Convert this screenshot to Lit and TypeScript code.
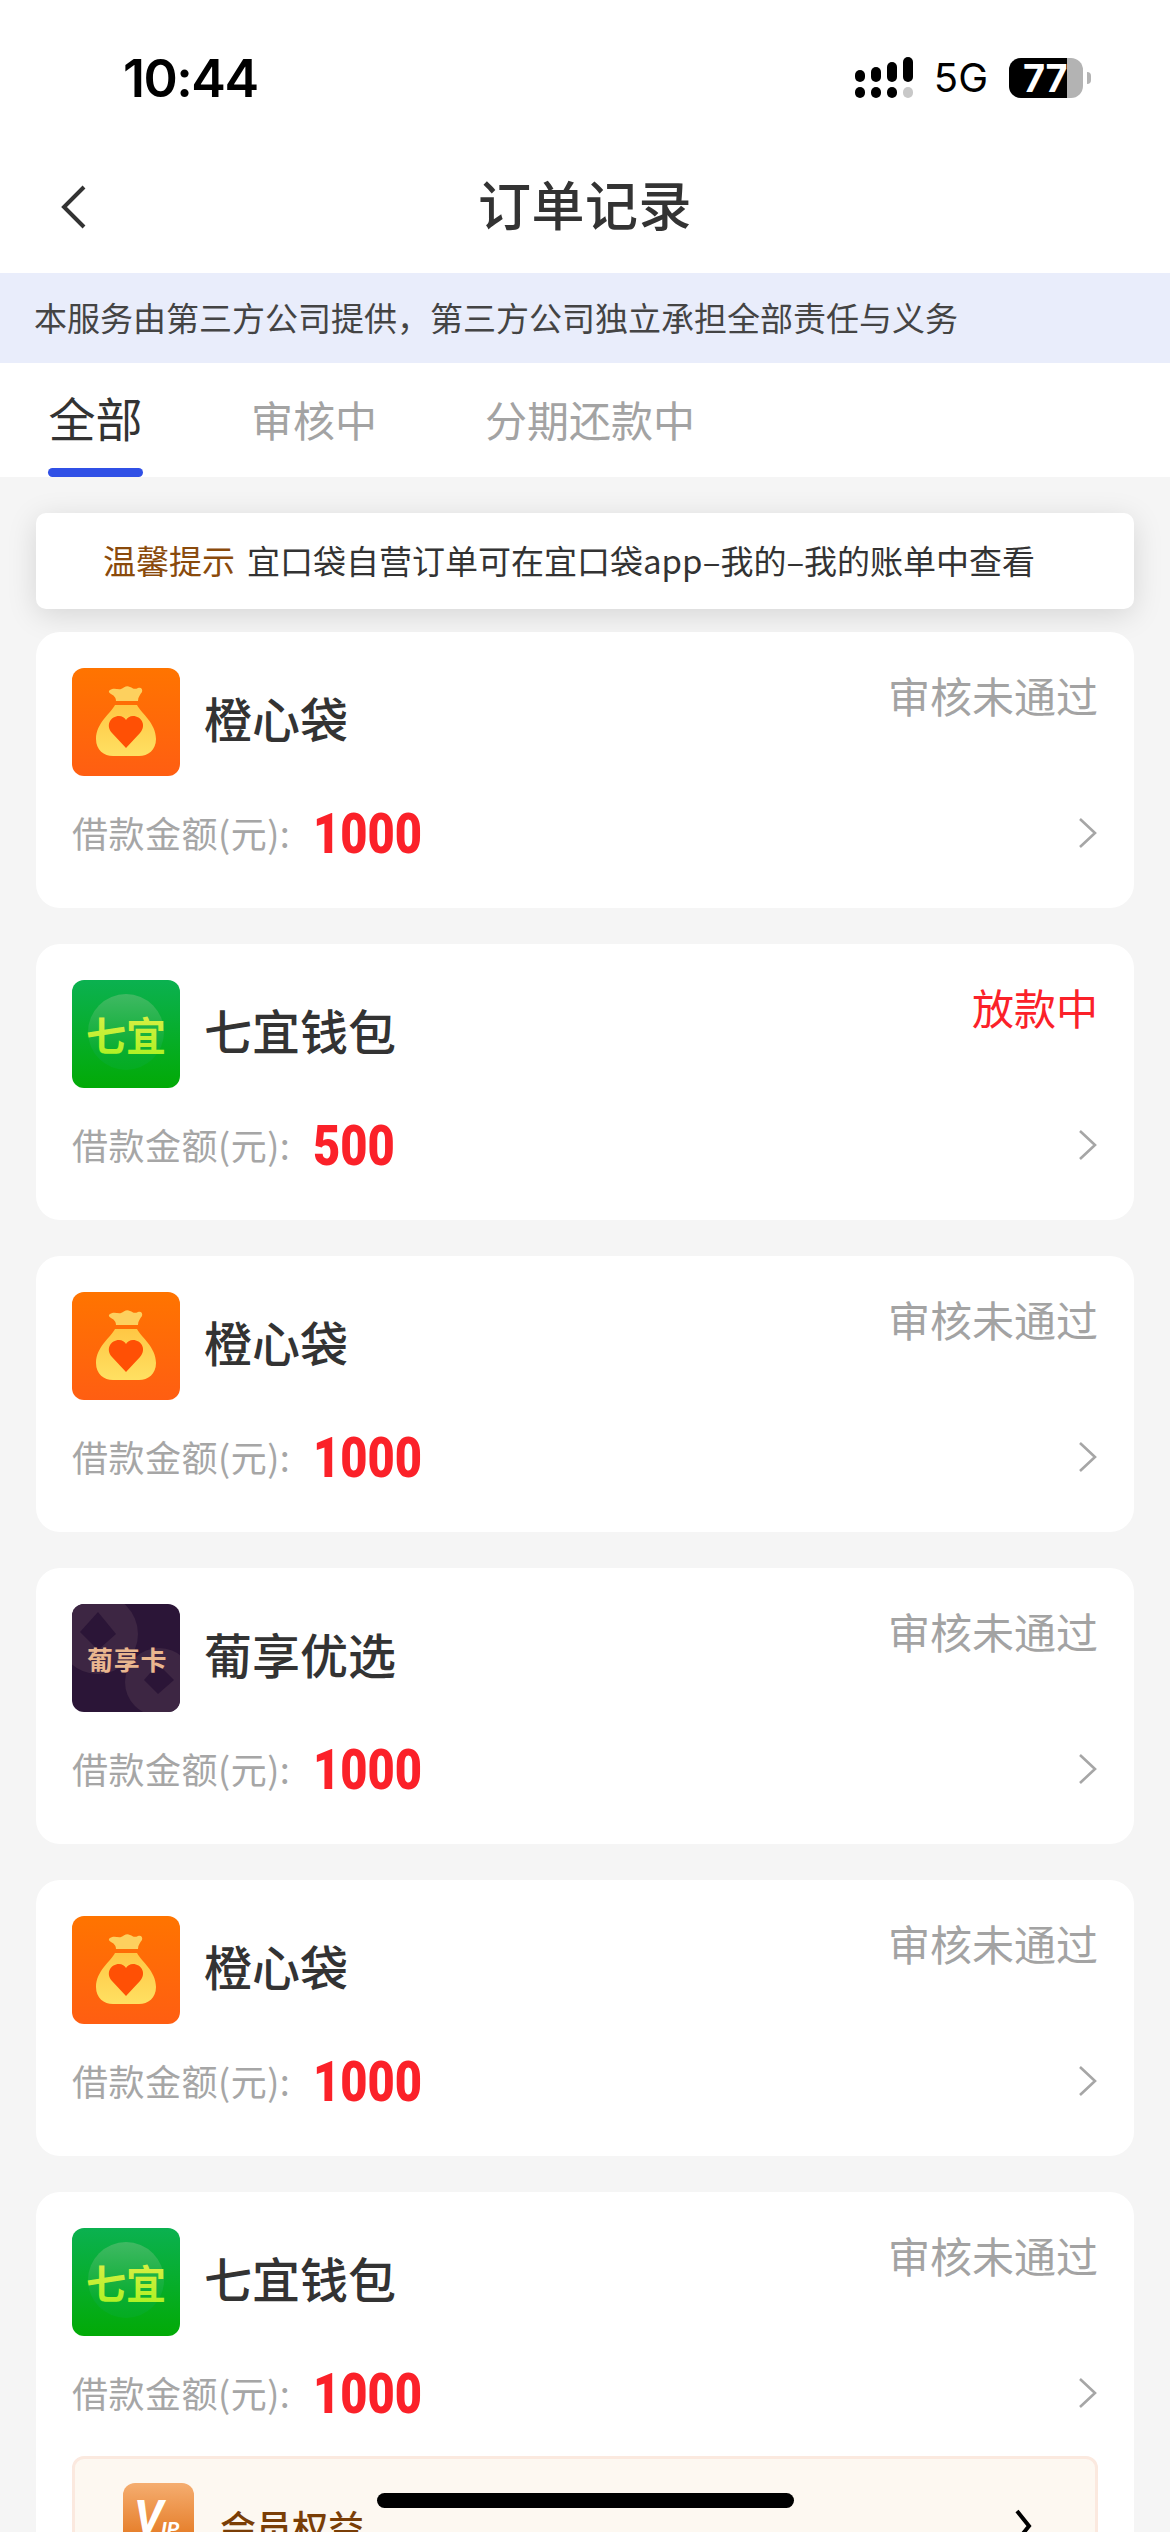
import { LitElement, html, css, svg } from 'lit';
import { customElement } from 'lit/decorators.js';

type IconKind = 'orange' | 'green' | 'grape';

interface Order {
  icon: IconKind;
  name: string;
  status: string;
  amount: string;
  paying?: boolean;
  vip?: boolean;
}

const orders: Order[] = [
  { icon: 'orange', name: '橙心袋', status: '审核未通过', amount: '1000' },
  { icon: 'green', name: '七宜钱包', status: '放款中', amount: '500', paying: true },
  { icon: 'orange', name: '橙心袋', status: '审核未通过', amount: '1000' },
  { icon: 'grape', name: '葡享优选', status: '审核未通过', amount: '1000' },
  { icon: 'orange', name: '橙心袋', status: '审核未通过', amount: '1000' },
  { icon: 'green', name: '七宜钱包', status: '审核未通过', amount: '1000', vip: true },
];

const CJK = `"Noto Sans CJK SC", sans-serif`;

// each svg needs its own gradient ids, the icons repeat on the page
let uid = 0;

function orangeIcon() {
  const id = `o${uid++}`;
  return svg`<svg class="logo" viewBox="0 0 108 108">
    <defs>
      <linearGradient id="${id}a" x1="0" y1="0" x2="0" y2="1">
        <stop offset="0" stop-color="#ff7400"/><stop offset="1" stop-color="#ff5e12"/>
      </linearGradient>
      <linearGradient id="${id}b" x1="0" y1="0" x2="0" y2="1">
        <stop offset="0" stop-color="#ffc744"/><stop offset="1" stop-color="#ffe062"/>
      </linearGradient>
    </defs>
    <rect width="108" height="108" rx="12" fill="url(#${id}a)"/>
    <path d="M38 22c4-3 8 0 11-1 3-1 5-4 9-2 3 1 4 3 8 1 3-1 5 1 4 4-2 3-4 5-4 9H44c0-4-3-6-5-7-2-1-3-3-1-4z" fill="#fdd05e"/>
    <path d="M43 37h22c4 8 19 18 19 34 0 11-8 17-17 17H41c-9 0-17-6-17-17 0-16 15-26 19-34z" fill="url(#${id}b)"/>
    <path d="M54 80 40 65c-7-8-1-17 7-17 3 0 6 2 7 4 1-2 4-4 7-4 8 0 14 9 7 17z" fill="#ff5005"/>
  </svg>`;
}

function greenIcon() {
  const id = `g${uid++}`;
  return svg`<svg class="logo" viewBox="0 0 108 108">
    <defs>
      <linearGradient id="${id}a" x1="0" y1="0" x2="0" y2="1">
        <stop offset="0" stop-color="#0bb150"/><stop offset="1" stop-color="#02aa06"/>
      </linearGradient>
      <linearGradient id="${id}b" x1="0" y1="0" x2="0" y2="1">
        <stop offset="0" stop-color="#3fb963"/><stop offset="0.75" stop-color="#08ad30"/><stop offset="1" stop-color="#05ac20"/>
      </linearGradient>
      <linearGradient id="${id}c" x1="0" y1="0" x2="0" y2="1">
        <stop offset="0" stop-color="#e4ee4c"/><stop offset="1" stop-color="#a6f21e"/>
      </linearGradient>
    </defs>
    <rect width="108" height="108" rx="12" fill="url(#${id}a)"/>
    <circle cx="54" cy="52" r="38" fill="url(#${id}b)"/>
    <text x="14" y="71" font-size="40" font-weight="700" font-family=${CJK} fill="url(#${id}c)">七宜</text>
  </svg>`;
}

function grapeIcon() {
  return svg`<svg class="logo" viewBox="0 0 108 108">
    <defs><clipPath id="gr${uid}"><rect width="108" height="108" rx="12"/></clipPath></defs>
    <g clip-path="url(#gr${uid++})">
      <rect width="108" height="108" fill="#2b1537"/>
      <circle cx="26" cy="30" r="40" fill="#3d2643"/>
      <circle cx="87" cy="78" r="34" fill="#3d2643"/>
      <path d="M26 8 44 30 26 46 8 28z" fill="#2b1537"/>
      <path d="M86 60 102 76 86 90 72 76z" fill="#2b1537"/>
      <text x="15" y="66" font-size="26" font-weight="700" letter-spacing="0.8" font-family=${CJK} fill="#eab78f">葡享卡</text>
    </g>
  </svg>`;
}

function vipIcon() {
  return svg`<svg class="vip-logo" viewBox="0 0 71 71">
    <defs>
      <linearGradient id="vipg" x1="0" y1="0" x2="0" y2="1">
        <stop offset="0" stop-color="#f5ad70"/><stop offset="1" stop-color="#e06d10"/>
      </linearGradient>
    </defs>
    <rect width="71" height="71" rx="12" fill="url(#vipg)"/>
    <text x="11" y="50" font-size="46" font-weight="700" font-style="italic" font-family="Roboto, sans-serif" fill="#fff">V</text>
    <text x="38" y="53" font-size="20" font-weight="700" font-style="italic" font-family="Roboto, sans-serif" fill="#fff">IP</text>
  </svg>`;
}

const logos: Record<IconKind, () => unknown> = {
  orange: orangeIcon,
  green: greenIcon,
  grape: grapeIcon,
};

@customElement('app-root')
export class AppRoot extends LitElement {
  static styles = css`
    :host {
      display: block;
      position: relative;
      width: 1170px;
      height: 2532px;
      overflow: hidden;
      background: #f5f5f5;
      font-family: "Noto Sans CJK SC", sans-serif;
      color: #333;
    }

    .head {
      background: #fff;
    }

    .status-bar {
      display: flex;
      align-items: center;
      justify-content: space-between;
      height: 60px;
      padding: 48px 79px 33px 123px;
      font-family: Inter, sans-serif;
      color: #000;
    }

    .time {
      font-size: 52px;
      font-weight: 600;
      letter-spacing: -1.5px;
    }

    .indicators {
      display: flex;
      align-items: center;
      gap: 21px;
    }

    .signal {
      width: 58px;
      height: 42px;
      display: block;
    }

    .net {
      font-size: 40px;
      line-height: 60px;
    }

    .battery-wrap {
      display: flex;
      align-items: center;
      gap: 4px;
    }

    .battery {
      position: relative;
      width: 74px;
      height: 40px;
      border-radius: 12px;
      overflow: hidden;
      background: #b3b3b3;
    }

    .battery-fill {
      width: 58px;
      height: 40px;
      background: #000;
      color: #fff;
      font-size: 38px;
      font-weight: 700;
      line-height: 40px;
      text-align: right;
      letter-spacing: -0.5px;
    }

    .nub {
      width: 4px;
      height: 12px;
      border-radius: 0 6px 6px 0;
      background: #b3b3b3;
    }

    .nav {
      position: relative;
      display: flex;
      align-items: center;
      justify-content: center;
      height: 132px;
    }

    .back {
      position: absolute;
      left: 61px;
      top: 44px;
      width: 26px;
      height: 44px;
    }

    .nav-title {
      margin-bottom: 8px;
      font-size: 53px;
      font-weight: 500;
      letter-spacing: 0.5px;
    }

    .notice {
      height: 90px;
      padding-left: 34px;
      background: #e9edfb;
      font-size: 33px;
      line-height: 88px;
      color: #444;
    }

    .tabs {
      display: flex;
      align-items: center;
      gap: 108px;
      height: 114px;
      padding-left: 48px;
      background: #fff;
    }

    .tab {
      position: relative;
      height: 114px;
      line-height: 112px;
      font-size: 42px;
      color: #a3a3a3;
      white-space: nowrap;
    }

    .tab.active {
      width: 95px;
      font-size: 47px;
      line-height: 108px;
      color: #333;
      text-align: center;
    }

    .tab.active::after {
      content: '';
      position: absolute;
      left: 0;
      right: 0;
      bottom: 0;
      height: 9px;
      border-radius: 5px;
      background: #3050e6;
    }

    .list {
      display: flex;
      flex-direction: column;
      padding: 36px 36px 0;
    }

    .tip {
      display: flex;
      align-items: center;
      gap: 12px;
      height: 94px;
      padding: 0 0 2px 67px;
      margin-bottom: 23px;
      border-radius: 10px;
      background: #fff;
      box-shadow: 0 6px 30px rgba(0, 0, 0, 0.13);
      font-size: 33px;
      color: #333;
    }

    .tip b {
      font-weight: 400;
      color: #8a4a0b;
    }

    .card {
      padding: 36px 36px 45px;
      margin-bottom: 36px;
      border-radius: 24px;
      background: #fff;
    }

    .top {
      display: flex;
      align-items: flex-start;
    }

    .logo {
      display: block;
      width: 108px;
      height: 108px;
      flex: none;
    }

    .name {
      margin-left: 24px;
      font-size: 48px;
      font-weight: 500;
      line-height: 98px;
    }

    .state {
      margin-left: auto;
      font-size: 42px;
      line-height: 54px;
      color: #a3a3a3;
    }

    .state.paying {
      color: #fb2129;
    }

    .amount-row {
      display: flex;
      align-items: center;
      height: 60px;
      margin-top: 27px;
    }

    .label {
      width: 241px;
      margin-bottom: 2px;
      font-size: 36px;
      letter-spacing: 0.5px;
      color: #a6a6a6;
    }

    .amount {
      margin-top: 2px;
      font-family: Roboto, sans-serif;
      font-size: 56px;
      font-weight: 900;
      line-height: 60px;
      color: #fb2129;
      transform: scaleX(0.84);
      transform-origin: left center;
    }

    .go {
      width: 20px;
      height: 32px;
      margin-left: auto;
    }

    .vip {
      display: flex;
      align-items: flex-start;
      margin-top: 33px;
      height: 160px;
      padding: 24px 0 0 48px;
      border: 3px solid #fbe9df;
      border-radius: 12px;
      background: #fdf8f1;
    }

    .vip-logo {
      display: block;
      width: 71px;
      height: 71px;
      flex: none;
    }

    .vip-title {
      margin: 22px 0 0 26px;
      font-size: 36px;
      font-weight: 500;
      line-height: 42px;
      color: #7a3e06;
    }

    .vip-go {
      width: 18px;
      height: 34px;
      margin: 26px 63px 0 auto;
    }

    .home-bar {
      position: absolute;
      left: 377px;
      top: 2493px;
      width: 417px;
      height: 15px;
      border-radius: 8px;
      background: #000;
    }
  `;

  private renderSignal() {
    const cols = [
      { x: 0, y: 13, h: 12 },
      { x: 16, y: 10, h: 15 },
      { x: 32, y: 5, h: 20 },
      { x: 48, y: 0, h: 25 },
    ];
    return html`<svg class="signal" viewBox="0 0 58 42">
      ${cols.map(
        (c, i) => svg`
          <rect x=${c.x} y=${c.y} width="10" height=${c.h} rx="5" fill="#000"/>
          <rect x=${c.x} y="30" width="10" height="11" rx="5" fill=${i === 3 ? '#c8c8c8' : '#000'}/>`
      )}
    </svg>`;
  }

  private renderCard(o: Order) {
    return html`
      <div class="card">
        <div class="top">
          ${logos[o.icon]()}
          <div class="name">${o.name}</div>
          <div class="state ${o.paying ? 'paying' : ''}">${o.status}</div>
        </div>
        <div class="amount-row">
          <div class="label">借款金额(元): </div>
          <div class="amount">${o.amount}</div>
          <svg class="go" viewBox="0 0 20 32" fill="none" stroke="#a6a6a6" stroke-width="2.6">
            <polyline points="2,2 17,16 2,30" />
          </svg>
        </div>
        ${o.vip
          ? html`
              <div class="vip">
                ${vipIcon()}
                <div class="vip-title">会员权益</div>
                <svg class="vip-go" viewBox="0 0 18 34" fill="none" stroke="#000" stroke-width="4">
                  <polyline points="3,2 15,17 3,32" />
                </svg>
              </div>
            `
          : ''}
      </div>
    `;
  }

  render() {
    return html`
      <div class="head">
        <div class="status-bar">
          <div class="time">10:44</div>
          <div class="indicators">
            ${this.renderSignal()}
            <div class="net">5G</div>
            <div class="battery-wrap">
              <div class="battery"><div class="battery-fill">77</div></div>
              <div class="nub"></div>
            </div>
          </div>
        </div>
        <div class="nav">
          <svg class="back" viewBox="0 0 26 44" fill="none" stroke="#333" stroke-width="4">
            <polyline points="23,2 3,22 23,42" />
          </svg>
          <div class="nav-title">订单记录</div>
        </div>
      </div>
      <div class="notice">本服务由第三方公司提供，第三方公司独立承担全部责任与义务</div>
      <div class="tabs">
        <div class="tab active">全部</div>
        <div class="tab">审核中</div>
        <div class="tab">分期还款中</div>
      </div>
      <div class="list">
        <div class="tip"><b>温馨提示</b><span>宜口袋自营订单可在宜口袋app–我的–我的账单中查看</span></div>
        ${orders.map((o) => this.renderCard(o))}
      </div>
      <div class="home-bar"></div>
    `;
  }
}
